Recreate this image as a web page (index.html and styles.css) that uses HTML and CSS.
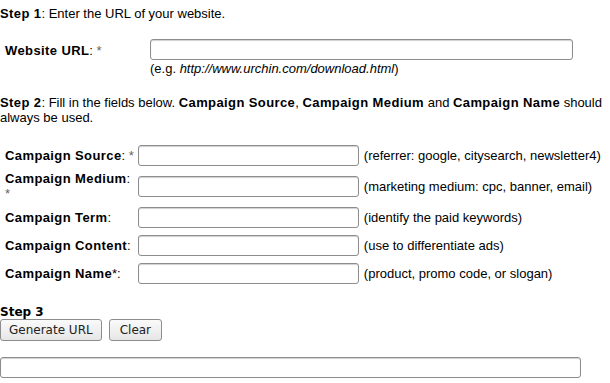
FILE: index.html
```html
<!DOCTYPE html>
<html lang="en">

<head>
    <meta charset="UTF-8">
    <meta name="viewport" content="width=device-width, initial-scale=1.0">
    <title>URL Builder</title>

    <link rel="stylesheet" href="styles.css">
</head>

<body>
    <form class="builder">
        <p class="step"><b>Step 1</b>: Enter the URL of your website.</p>

        <table class="fields url-table">
            <tr>
                <td class="label url-label"><b>Website URL</b>: <span class="req">*</span></td>
                <td>
                    <input class="text url-input" type="text">
                    <div class="hint">(e.g. <i>http://www.urchin.com/download.html</i>)</div>
                </td>
            </tr>
        </table>

        <p class="step step2"><b>Step 2</b>: Fill in the fields below. <b>Campaign Source</b>, <b>Campaign Medium</b> and <b>Campaign Name</b> should always be used.</p>

        <table class="fields campaign-table">
            <tr>
                <td class="label"><b>Campaign Source</b>: <span class="req">*</span></td>
                <td><input class="text small" type="text"></td>
                <td class="note">(referrer: google, citysearch, newsletter4)</td>
            </tr>
            <tr>
                <td class="label"><b>Campaign Medium</b>:<br><span class="req">*</span></td>
                <td><input class="text small" type="text"></td>
                <td class="note">(marketing medium: cpc, banner, email)</td>
            </tr>
            <tr>
                <td class="label"><b>Campaign Term</b>:</td>
                <td><input class="text small" type="text"></td>
                <td class="note">(identify the paid keywords)</td>
            </tr>
            <tr>
                <td class="label"><b>Campaign Content</b>:</td>
                <td><input class="text small" type="text"></td>
                <td class="note">(use to differentiate ads)</td>
            </tr>
            <tr>
                <td class="label"><b>Campaign Name</b>*:</td>
                <td><input class="text small" type="text"></td>
                <td class="note">(product, promo code, or slogan)</td>
            </tr>
        </table>

        <div class="step3">Step 3</div>
        <div class="buttons">
            <button type="button" class="btn">Generate URL</button>
            <button type="button" class="btn btn-clear">Clear</button>
        </div>

        <input class="text result" type="text">
    </form>
</body>

</html>
```

FILE: styles.css
```css
body {
    margin: 0;
    font-family: "Liberation Sans", Arial, sans-serif;
    font-size: 13px;
    color: #000;
    background: #fff;
}

.builder {
    width: 610px;
}

.step {
    margin: 6px 0 0 0;
    line-height: 15px;
}

.step2 {
    margin-top: 16px;
}

b {
    letter-spacing: 0.4px;
}

.fields {
    border-collapse: separate;
    border-spacing: 2px;
}

.fields td {
    padding: 1px;
    vertical-align: middle;
}

.url-table {
    margin-top: 15px;
}

.url-label {
    width: 141px;
    vertical-align: top !important;
    padding-top: 5px !important;
}

.label {
    padding-left: 3px !important;
    padding-right: 1px !important;
    white-space: nowrap;
    line-height: 15px;
}

.req {
    color: #666;
}

.hint {
    margin-top: 1px;
}

.text {
    box-sizing: border-box;
    height: 21px;
    border: 1px solid #8d8d8d;
    border-radius: 3px;
    box-shadow: inset 0 1px 1px #d0d0d0;
    padding: 0 3px;
    font-size: 13px;
    background: #fff;
}

.url-input {
    width: 423px;
}

.small {
    width: 221px;
}

.campaign-table {
    margin-top: 15px;
}

.campaign-table td {
    height: 24px;
}

.note {
    padding-left: 2px !important;
    white-space: nowrap;
}

.step3 {
    margin-top: 17px;
    font-family: "DejaVu Sans", sans-serif;
    font-weight: bold;
    font-size: 12px;
    line-height: 14px;
}

.buttons {
    display: flex;
    gap: 7px;
}

.btn {
    height: 22px;
    padding: 0 8px;
    font-family: "DejaVu Sans", sans-serif;
    font-size: 12px;
    color: #222;
    background: linear-gradient(#fafafa, #e6e6e6);
    border: 1px solid #8d8d8d;
    border-radius: 3px;
}

.btn-clear {
    padding: 0 10px;
}

.result {
    display: block;
    margin-top: 16px;
    width: 581px;
}
```
